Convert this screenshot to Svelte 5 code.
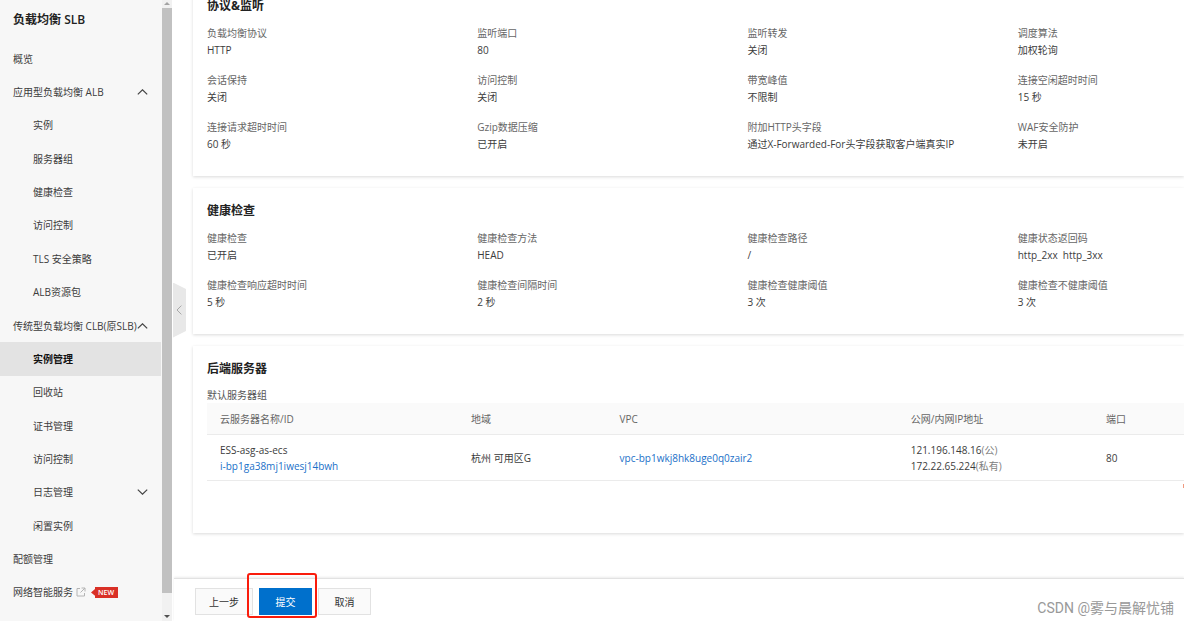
<script>
  const nav = [
    { text: '概览' },
    { text: '应用型负载均衡 ALB', arrow: 'up' },
    { text: '实例', sub: true },
    { text: '服务器组', sub: true },
    { text: '健康检查', sub: true },
    { text: '访问控制', sub: true },
    { text: 'TLS 安全策略', sub: true },
    { text: 'ALB资源包', sub: true },
    { text: '传统型负载均衡 CLB(原SLB)', arrow: 'up' },
    { text: '实例管理', sub: true, active: true },
    { text: '回收站', sub: true },
    { text: '证书管理', sub: true },
    { text: '访问控制', sub: true },
    { text: '日志管理', sub: true, arrow: 'down' },
    { text: '闲置实例', sub: true },
    { text: '配额管理' },
    { text: '网络智能服务', external: true }
  ];

  const sections = [
    {
      title: '协议&监听',
      items: [
        ['负载均衡协议', 'HTTP'],
        ['监听端口', '80'],
        ['监听转发', '关闭'],
        ['调度算法', '加权轮询'],
        ['会话保持', '关闭'],
        ['访问控制', '关闭'],
        ['带宽峰值', '不限制'],
        ['连接空闲超时时间', '15 秒'],
        ['连接请求超时时间', '60 秒'],
        ['Gzip数据压缩', '已开启'],
        ['附加HTTP头字段', '通过X-Forwarded-For头字段获取客户端真实IP'],
        ['WAF安全防护', '未开启']
      ]
    },
    {
      title: '健康检查',
      items: [
        ['健康检查', '已开启'],
        ['健康检查方法', 'HEAD'],
        ['健康检查路径', '/'],
        ['健康状态返回码', 'http_2xx\u00a0 http_3xx'],
        ['健康检查响应超时时间', '5 秒'],
        ['健康检查间隔时间', '2 秒'],
        ['健康检查健康阈值', '3 次'],
        ['健康检查不健康阈值', '3 次']
      ]
    }
  ];
</script>

<div class="page">
  <aside class="sidebar">
    <nav class="menu" aria-label="负载均衡 SLB">
      <h1>负载均衡 <span>SLB</span></h1>
      <ul>
        {#each nav as item}
          <li>
            <a href="#top" class:sub={item.sub} class:active={item.active}>
              <span>{item.text}</span>
              {#if item.external}
                <svg class="external" viewBox="0 0 10 10" aria-hidden="true">
                  <path d="M4 1.5H1V9H8.5V6M5.5 1H9V4.5M9 1L4.5 5.5" />
                </svg>
                <b class="new">NEW</b>
              {/if}
              {#if item.arrow}
                <svg class="arrow" viewBox="0 0 11 6" aria-hidden="true">
                  <path d={item.arrow === 'up' ? 'M.8 5.4L5.5.8L10.2 5.4' : 'M.8.6L5.5 5.2L10.2.6'} />
                </svg>
              {/if}
            </a>
          </li>
        {/each}
      </ul>
    </nav>
    <div class="scrollbar" aria-hidden="true">
      <svg viewBox="0 0 6 3"><path d="M0 3L3 0L6 3Z" fill="#a3a3a3" /></svg>
      <div class="thumb"></div>
      <svg viewBox="0 0 6 3"><path d="M0 0L3 3L6 0Z" fill="#505050" /></svg>
    </div>
    <button class="collapse" aria-label="收起">
      <svg viewBox="0 0 6 10" aria-hidden="true"><path d="M5.4.6L1 5L5.4 9.4" /></svg>
    </button>
  </aside>

  <main>
    <div class="content">
      {#each sections as section}
        <section class="card">
          <h2>{section.title}</h2>
          <dl>
            {#each section.items as [label, value]}
              <div>
                <dt>{label}</dt>
                <dd>{value}</dd>
              </div>
            {/each}
          </dl>
        </section>
      {/each}

      <section class="card servers">
        <h2>后端服务器</h2>
        <table>
          <caption>默认服务器组</caption>
          <colgroup>
            <col class="c-name" /><col class="c-zone" /><col class="c-vpc" /><col class="c-ip" /><col />
          </colgroup>
          <thead>
            <tr>
              <th>云服务器名称/ID</th>
              <th>地域</th>
              <th>VPC</th>
              <th>公网/内网IP地址</th>
              <th>端口</th>
            </tr>
          </thead>
          <tbody>
            <tr>
              <td>ESS-asg-as-ecs<br /><a href="#top">i-bp1ga38mj1iwesj14bwh</a></td>
              <td>杭州 可用区G</td>
              <td><a href="#top">vpc-bp1wkj8hk8uge0q0zair2</a></td>
              <td>121.196.148.16<i>(公)</i><br />172.22.65.224<i>(私有)</i></td>
              <td>80</td>
            </tr>
          </tbody>
        </table>
        <span class="edge-mark"></span>
      </section>
    </div>

    <footer>
      <button>上一步</button>
      <span class="marked"><button class="primary">提交</button></span>
      <button>取消</button>
    </footer>
  </main>
  <div class="watermark">CSDN @雾与晨解忧铺</div>
</div>

<style>
  :global(body) {
    background: #fff;
  }
  .page {
    display: flex;
    min-height: 100vh;
    position: relative;
    overflow: hidden;
    font: 10px/16px 'Open Sans', 'Noto Sans CJK SC', sans-serif;
    color: #3c3c3c;
  }
  h1,
  h2,
  ul,
  dl,
  dd {
    margin: 0;
    padding: 0;
  }
  svg {
    display: block;
    fill: none;
    stroke: #444;
  }
  .sidebar {
    position: relative;
    display: flex;
    flex: none;
    width: 172px;
    background: #f7f7f7;
  }
  .menu {
    flex: 1;
    display: flex;
    flex-direction: column;
    padding: 0 1px 12px 0;
  }
  h1 {
    padding: 10px 13px 12px;
    font-size: 12px;
    line-height: 20px;
    font-weight: 700;
    color: #222;
  }
  h1 span {
    font-weight: 600;
  }
  ul {
    flex: 1;
    display: flex;
    flex-direction: column;
    list-style: none;
  }
  li {
    flex: 1;
    display: flex;
    min-height: 32px;
  }
  li a {
    flex: 1;
    display: flex;
    align-items: center;
    padding: 0 13px;
    color: #3c3c3c;
    text-decoration: none;
    white-space: nowrap;
  }
  li a.sub {
    padding-left: 33px;
  }
  li a.active {
    background: #e3e3e3;
    color: #111;
    font-weight: 700;
  }
  .arrow {
    width: 11px;
    height: 6px;
    margin-left: auto;
  }
  .arrow path {
    stroke-width: 1.2;
  }
  .external {
    width: 10px;
    height: 10px;
    margin-left: 3px;
    stroke: #b4b4b4;
  }
  .new {
    margin-left: 5px;
    padding: 0 4px 0 7px;
    background: #d93026;
    color: #fff;
    font-size: 7px;
    line-height: 11px;
    font-weight: 600;
    clip-path: polygon(0 50%, 4px 20%, 4px 0, 100% 0, 100% 100%, 4px 100%, 4px 80%);
  }
  .scrollbar {
    flex: none;
    width: 10px;
    display: flex;
    flex-direction: column;
    align-items: center;
    padding: 2px 0 3px;
    box-sizing: border-box;
    background: #f1f1f1;
  }
  .scrollbar svg {
    width: 6px;
    height: 3px;
    stroke: none;
  }
  .thumb {
    flex: 1;
    align-self: stretch;
    margin: 3px 0 22px;
    background: #c1c1c1;
  }
  .collapse {
    position: absolute;
    left: 100%;
    top: calc(50% - 28px);
    width: 14px;
    height: 55px;
    padding: 0 0 0 4px;
    border: 0;
    background: #e8e8e8;
    clip-path: polygon(1px 0, 100% 12%, 100% 88%, 1px 100%);
    z-index: 1;
  }
  .collapse svg {
    width: 6px;
    height: 10px;
    stroke: #a8a8a8;
  }
  main {
    flex: 1;
    min-width: 0;
    display: flex;
    flex-direction: column;
  }
  .content {
    flex: 1;
    display: flex;
    flex-direction: column;
    gap: 12px;
    margin-top: -17px;
    padding: 0 0 44px 21px;
  }
  .card {
    padding: 13px 0 24px 14px;
    box-shadow: 0 1px 3px rgba(0, 0, 0, 0.15);
  }
  h2 {
    margin-bottom: 9px;
    font-size: 12px;
    line-height: 20px;
    font-weight: 700;
    color: #222;
  }
  dl {
    display: grid;
    grid-template-columns: repeat(3, minmax(0, 13fr)) minmax(0, 8fr);
    row-gap: 14px;
  }
  dt {
    line-height: 17px;
    color: #666;
  }
  dd {
    white-space: nowrap;
  }
  .servers {
    position: relative;
    padding-bottom: 52px;
  }
  .edge-mark {
    position: absolute;
    right: 0;
    bottom: 45px;
    width: 1px;
    height: 4px;
    background: #ef9a80;
  }
  table {
    width: 100%;
    table-layout: fixed;
    border-collapse: collapse;
  }
  caption {
    text-align: left;
    line-height: 15px;
    color: #555;
  }
  .c-name {
    width: 25.7%;
  }
  .c-zone {
    width: 15.2%;
  }
  .c-vpc {
    width: 29.8%;
  }
  .c-ip {
    width: 20%;
  }
  th,
  td {
    padding: 7px 0 6px 13px;
    border-bottom: 1px solid #ebebeb;
    text-align: left;
    font-weight: 400;
    white-space: nowrap;
  }
  th {
    padding: 8px 0 7px 13px;
    background: #fafafa;
    color: #666;
  }
  td a {
    color: #1a70c8;
    text-decoration: none;
  }
  i {
    font-style: normal;
    color: #808080;
  }
  footer {
    display: flex;
    gap: 6px;
    margin-left: 2px;
    padding: 9px 0 6px 21px;
    border-top: 1px solid #e2e2e2;
    box-shadow: 0 -1px 2px rgba(0, 0, 0, 0.08);
  }
  footer button {
    min-width: 53px;
    height: 27px;
    padding: 0 13px;
    border: 1px solid #e2e2e2;
    background: #fafafa;
    color: #333;
    font: inherit;
  }
  footer .primary {
    display: block;
    border-color: #0070cc;
    background: #0070cc;
    color: #fff;
  }
  .marked {
    position: relative;
  }
  .marked::after {
    content: '';
    position: absolute;
    inset: -15px -5px -3px -12px;
    border: 2px solid #f91c0c;
    border-radius: 3px;
    pointer-events: none;
  }
  .watermark {
    position: absolute;
    right: 10px;
    bottom: 4px;
    font-family: Roboto, 'Noto Sans CJK SC', sans-serif;
    font-size: 14px;
    line-height: 18px;
    color: #999;
  }
</style>
